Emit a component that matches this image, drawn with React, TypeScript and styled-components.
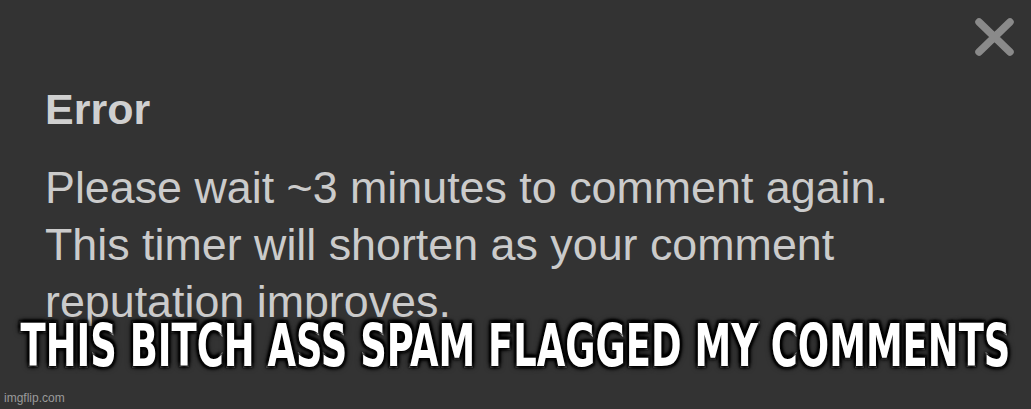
import styled, { createGlobalStyle } from 'styled-components';

const GlobalStyle = createGlobalStyle`
  html, body {
    margin: 0;
    padding: 0;
    background: #333333;
  }
`;

const Frame = styled.div`
  position: relative;
  width: 1031px;
  height: 409px;
  overflow: hidden;
  background: #333333;
  font-family: 'Liberation Sans', Arial, sans-serif;
  color: #cfcfcf;
`;

const Dialog = styled.div`
  display: flex;
  flex-direction: column;
  padding: 86px 0 0 45px;
`;

const Title = styled.h2`
  margin: 0;
  font-size: 43px;
  font-weight: 700;
  line-height: 46px;
  color: #d0d0d0;
`;

const Message = styled.p`
  margin: 27px 0 0;
  font-size: 44.8px;
  line-height: 57px;
  color: #cbcbcb;
  max-width: 900px;
`;

const CloseButton = styled.button`
  position: absolute;
  top: 17px;
  right: 16px;
  width: 41px;
  height: 40px;
  padding: 0;
  border: none;
  background: none;
  display: flex;
  align-items: center;
  justify-content: center;
`;

const Caption = styled.div`
  position: absolute;
  left: 0;
  right: 0;
  top: 317px;
  display: flex;
  justify-content: center;
  white-space: nowrap;
`;

// condensed, tall meme lettering: narrow glyphs stretched vertically
const CaptionText = styled.span`
  display: inline-block;
  transform: scaleY(1.43);
  transform-origin: top center;
  font-family: 'DejaVu Sans Condensed', 'DejaVu Sans', sans-serif;
  font-weight: 700;
  font-size: 41px;
  line-height: 41px;
  color: #ffffff;
  text-transform: uppercase;
  -webkit-text-stroke: 2px #ffffff;
  paint-order: stroke fill;
  text-shadow:
    2px 2px 2px #000,
    -2px -2px 2px #000,
    2px -2px 2px #000,
    -2px 2px 2px #000,
    0 0 6px #000;
`;

const Watermark = styled.span`
  position: absolute;
  left: 4px;
  bottom: 4px;
  font-size: 12px;
  color: #9a9a9a;
`;

const CloseIcon = () => (
  <svg width="41" height="40" viewBox="0 0 41 40">
    <path d="M5 5 L36 35 M36 5 L5 35" stroke="#8a8a8a" strokeWidth="7.5" strokeLinecap="round" />
  </svg>
);

export default function App() {
  return (
    <Frame>
      <GlobalStyle />
      <Dialog>
        <Title>Error</Title>
        <Message>
          Please wait ~3 minutes to comment again. This timer will shorten as your comment reputation improves.
        </Message>
      </Dialog>
      <CloseButton aria-label="Close">
        <CloseIcon />
      </CloseButton>
      <Caption>
        <CaptionText>This bitch ass spam flagged my comments</CaptionText>
      </Caption>
      <Watermark>imgflip.com</Watermark>
    </Frame>
  );
}
